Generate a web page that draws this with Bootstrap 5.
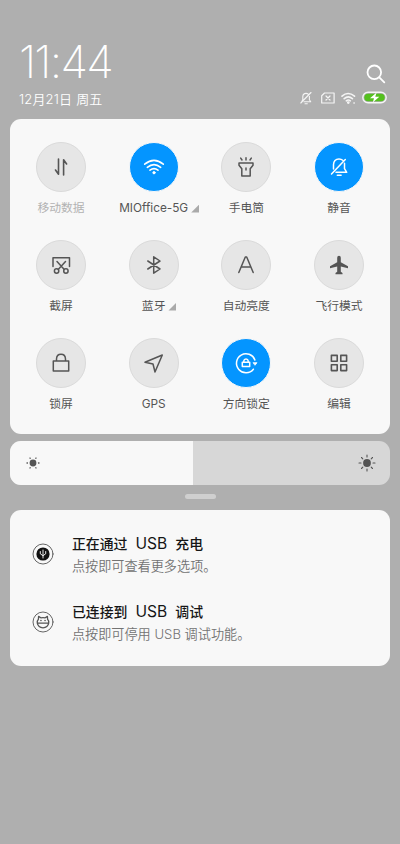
<!DOCTYPE html>
<html lang="zh-CN">
<head>
<meta charset="utf-8">
<meta name="viewport" content="width=device-width, initial-scale=1">
<title>控制中心</title>
<link href="https://cdn.jsdelivr.net/npm/bootstrap@5.3.0/dist/css/bootstrap.min.css" rel="stylesheet">
<style>
body{background:#afafaf;font-family:Inter,"Noto Sans CJK SC",sans-serif;width:400px;height:844px;overflow:hidden;color:#555}
svg{display:block;fill:none;stroke:currentColor;stroke-linecap:round;stroke-linejoin:round}
.shade{padding:0 10.4px}
.top-bar{height:118.6px;padding:39px 3px 0 8.5px;color:#fff}
.clock{font-size:45px;line-height:46px;font-weight:200;height:50.5px;letter-spacing:-1.7px}
.date{font-size:13px;line-height:18px;font-weight:350;letter-spacing:.2px}
.search{margin:24.5px 1px 5px}
.status{height:18px;color:#f5f5f5}
.status-wifi{margin:0 6px}
.panel{background:#f8f8f8;border-radius:11px}
.toggles{height:315px;padding:23px 4.3px 0}
.tile{height:98px}
.disc{width:50px;height:50px;background:#e6e6e6;border:1px solid #dadada;color:#555}
.disc.on{background:#0495ff;border:1px solid #f8f8f8;color:#fff}
.tile-label{font-size:11.8px;line-height:18px;margin-top:7px;white-space:nowrap}
.tile-label.off{color:#b2b2b2}
.corner{left:100%;bottom:4px;margin-left:3px;width:8px;height:8px;background:#aaa;clip-path:polygon(100% 0,100% 100%,0 100%)}
.brightness{height:44.5px;margin-top:7px;border-radius:11px;background:#d7d7d7;overflow:hidden}
.level{background:#f8f8f8;padding-left:15.6px}
.rest{padding-right:13.6px}
.handle{width:31px;height:4.5px;background:#cfcfcf;margin:9px auto 0}
.notices{margin-top:11.6px;height:156px;padding:23px 21px 0}
.notice{height:67.7px}
.notice-icon{margin:10px 17.9px 0 .6px}
.notice-title{font-size:13.9px;line-height:23px;font-weight:500;color:#161616}
.latin{font-size:15.6px;line-height:1;font-weight:400;margin:0 8px}
.notice-text{font-size:13.15px;line-height:20px;color:#737373;font-weight:350}
</style>
</head>
<body>
<main class="shade">
<header class="top-bar d-flex justify-content-between">
  <div>
    <div class="clock">11:44</div>
    <div class="date">12月21日 周五</div>
  </div>
  <div class="d-flex flex-column align-items-end">
    <svg class="search" width="20" height="20" viewBox="0 0 20 20" stroke-width="1.8"><circle cx="8.3" cy="8.3" r="6.8"/><path d="M13.3 13.3l5 5"/></svg>
    <div class="status d-flex align-items-center">
      <svg width="14" height="14" viewBox="0 0 14 14" stroke-width="1.1" class="me-2"><path d="M2.8 10.5l1-1.7V5.6Q4 2.4 7 2.4q1.4 0 2.2.8M10.4 5.2v3.6l1.3 1.9H5M6 12.7h2.3M1.8 12L12 1.5"/></svg>
      <svg width="14" height="14" viewBox="0 0 14 14" stroke-width="1.2"><path d="M3.5 2h9.6v10H.7V4.7zM5 5l4 4M9 5L5 9"/></svg>
      <svg class="status-wifi" width="15" height="14" viewBox="0 0 15 14" stroke-width="1.6"><path d="M1 5.2q6-5.4 12.5 0M3.2 7.7q4-3.5 8.2 0M5.3 9.8q2-1.5 4 0"/><circle cx="7.3" cy="11.6" r=".6" fill="currentColor"/><path d="M13 12h.2"/></svg>
      <svg width="25" height="13" viewBox="0 0 25 13"><rect x=".8" y="1.2" width="23.4" height="10.6" rx="5.3" stroke-width="1.4"/><rect x="2.3" y="2.7" width="20.4" height="7.6" rx="3.8" fill="#54c01e" stroke="none"/><path d="M14.6 1.5L8 7.2h4L10.8 11.5l6.5-5.8h-4z" fill="#fff" stroke="none"/></svg>
    </div>
  </div>
</header>

<section class="panel toggles">
  <div class="row row-cols-4 g-0">
    <div class="col tile d-flex flex-column align-items-center"><div class="disc rounded-circle d-flex align-items-center justify-content-center"><svg width="24" height="24" viewBox="0 0 24 24" stroke-width="1.6"><path d="M9.5 4v15.3l-3-4.3M14.6 20V4.7l3 4.3"/></svg></div><div class="tile-label off">移动数据</div></div>
    <div class="col tile d-flex flex-column align-items-center"><div class="disc on rounded-circle d-flex align-items-center justify-content-center"><svg width="24" height="24" viewBox="0 0 24 24" stroke-width="1.6"><path d="M2.7 9.2q9.3-7.5 18.6 0M5.3 12.3q6.7-5.4 13.4 0M8 15.2q4-3.1 8 0"/><circle cx="12" cy="17.7" r="1.2" fill="currentColor" stroke-width=".8"/></svg></div><div class="tile-label position-relative">MIOffice-5G<span class="corner position-absolute"></span></div></div>
    <div class="col tile d-flex flex-column align-items-center"><div class="disc rounded-circle d-flex align-items-center justify-content-center"><svg width="24" height="24" viewBox="0 0 24 24" stroke-width="1.5"><path d="M5 8h14v2.2l-2.8 3.6V21H7.8v-7.2L5 10.2zM12 5V2.8M8 5L6.7 3.1M16 5l1.3-1.9M12 13v2"/></svg></div><div class="tile-label">手电筒</div></div>
    <div class="col tile d-flex flex-column align-items-center"><div class="disc on rounded-circle d-flex align-items-center justify-content-center"><svg width="24" height="24" viewBox="0 0 24 24" stroke-width="1.5"><path d="M6.5 14V9.8Q6.8 4 12 4q2.3 0 3.7 1.3M17.5 8.2v5.5l2.2 3.6H9M10.3 20.3h3.8M4.5 19L18.3 4.5"/></svg></div><div class="tile-label">静音</div></div>

    <div class="col tile d-flex flex-column align-items-center"><div class="disc rounded-circle d-flex align-items-center justify-content-center"><svg width="24" height="24" viewBox="0 0 24 24" stroke-width="1.5"><path d="M4 13.5V4.7h16.5v8.8M8 8.5l7.3 8M16.5 8.5l-7.3 8"/><circle cx="7.6" cy="18" r="2.2"/><circle cx="16.9" cy="18" r="2.2"/></svg></div><div class="tile-label">截屏</div></div>
    <div class="col tile d-flex flex-column align-items-center"><div class="disc rounded-circle d-flex align-items-center justify-content-center"><svg width="24" height="24" viewBox="0 0 24 24" stroke-width="1.5"><path d="M5.8 8l12.2 8-6.3 4.2V3.8L18 8 5.8 16"/></svg></div><div class="tile-label position-relative">蓝牙<span class="corner position-absolute"></span></div></div>
    <div class="col tile d-flex flex-column align-items-center"><div class="disc rounded-circle d-flex align-items-center justify-content-center"><svg width="24" height="24" viewBox="0 0 24 24" stroke-width="1.5"><path d="M4.8 19.5L11.3 4h1.4l6.5 15.5M7.3 14h9.4"/></svg></div><div class="tile-label">自动亮度</div></div>
    <div class="col tile d-flex flex-column align-items-center"><div class="disc rounded-circle d-flex align-items-center justify-content-center"><svg width="24" height="24" viewBox="0 0 24 24"><path fill="currentColor" stroke="none" d="M12 2.8q1.8 0 1.8 2v4.4l7.2 4v2l-7.2-1.7v5.3l1.7 1.2v1.2h-7V20l1.7-1.2v-5.3L3 15.2v-2l7.2-4V4.8q0-2 1.8-2z"/></svg></div><div class="tile-label">飞行模式</div></div>

    <div class="col tile d-flex flex-column align-items-center"><div class="disc rounded-circle d-flex align-items-center justify-content-center"><svg width="24" height="24" viewBox="0 0 24 24" stroke-width="1.5"><path d="M4.3 10h15.4v10H4.3zM7.5 10V8q.2-4.7 4.5-4.7T16.5 8v2"/></svg></div><div class="tile-label">锁屏</div></div>
    <div class="col tile d-flex flex-column align-items-center"><div class="disc rounded-circle d-flex align-items-center justify-content-center"><svg width="24" height="24" viewBox="0 0 24 24" stroke-width="1.5"><path d="M3 11.3L20.3 4 13 21l-2-8z"/></svg></div><div class="tile-label">GPS</div></div>
    <div class="col tile d-flex flex-column align-items-center"><div class="disc on rounded-circle d-flex align-items-center justify-content-center"><svg width="24" height="24" viewBox="0 0 24 24" stroke-width="1.5"><path d="M19.4 18.2A9.5 9.5 0 1 1 20.9 9M8.3 11.2h7.4v4.3H8.3zM9.8 11V9.9q.3-1.9 2.2-1.9t2.2 1.9V11"/><path d="M19.4 11.7h3.6L21.2 14z" fill="currentColor" stroke-width=".8"/></svg></div><div class="tile-label">方向锁定</div></div>
    <div class="col tile d-flex flex-column align-items-center"><div class="disc rounded-circle d-flex align-items-center justify-content-center"><svg width="24" height="24" viewBox="0 0 24 24" stroke-width="1.6"><path d="M4.4 4.4h5.8v5.8H4.4zM13.8 4.4h5.8v5.8h-5.8zM4.4 13.8h5.8v5.8H4.4zM13.8 13.8h5.8v5.8h-5.8z"/></svg></div><div class="tile-label">编辑</div></div>
  </div>
</section>

<section class="brightness d-flex justify-content-between align-items-center">
  <div class="level h-100 d-flex align-items-center" style="width:182.5px"><svg width="14" height="14" viewBox="-7 -7 14 14" stroke-width="1.3"><circle r="3.4" fill="currentColor" stroke="none"/><path d="M-6 0h.5M6 0h-.5M-3-5l.2.3M3-5l-.2.3M-3 5l.2-.3M3 5l-.2-.3"/></svg></div>
  <div class="rest"><svg width="18" height="18" viewBox="-9 -9 18 18" stroke-width="1.1"><circle r="3.9" fill="currentColor" stroke="none"/><path d="M-8 0h2M8 0h-2M0-8v2M0 8v-2M-5.5-5.5l1.3 1.3M5.5-5.5l-1.3 1.3M-5.5 5.5l1.3-1.3M5.5 5.5l-1.3-1.3"/></svg></div>
</section>
<div class="handle rounded-pill"></div>

<section class="panel notices">
  <div class="notice d-flex">
    <svg class="notice-icon" width="22" height="22" viewBox="0 0 22 22" stroke="#222"><circle cx="11" cy="11" r="10" stroke-width=".9"/><circle cx="11" cy="11" r="6.6" fill="#111" stroke="none"/><path d="M11 15V7M8.3 8.5v2.3L11 12.7l2.7-1.9V8.5" stroke="#fff" stroke-width=".9"/></svg>
    <div><div class="notice-title">正在通过<span class="latin">USB</span>充电</div><div class="notice-text">点按即可查看更多选项。</div></div>
  </div>
  <div class="notice d-flex">
    <svg class="notice-icon" width="22" height="22" viewBox="0 0 22 22" stroke="#222"><circle cx="11" cy="11" r="10" stroke-width=".9"/><path d="M6.4 8.2L6.6 5.4l2.2 1.4q2.2-.4 4.4 0l2.2-1.4.2 2.8q1.5 1.6 1.1 4-.9 4.6-5.7 4.6t-5.7-4.6q-.4-2.4 1.1-4zM5.5 12.2h11" stroke-width="1.3"/><path d="M8.9 9.6h.1M13 9.6h.1" stroke-width="1.5"/></svg>
    <div><div class="notice-title">已连接到<span class="latin">USB</span>调试</div><div class="notice-text">点按即可停用 USB 调试功能。</div></div>
  </div>
</section>
</main>
<script src="https://cdn.jsdelivr.net/npm/bootstrap@5.3.0/dist/js/bootstrap.bundle.min.js"></script>
</body>
</html>
